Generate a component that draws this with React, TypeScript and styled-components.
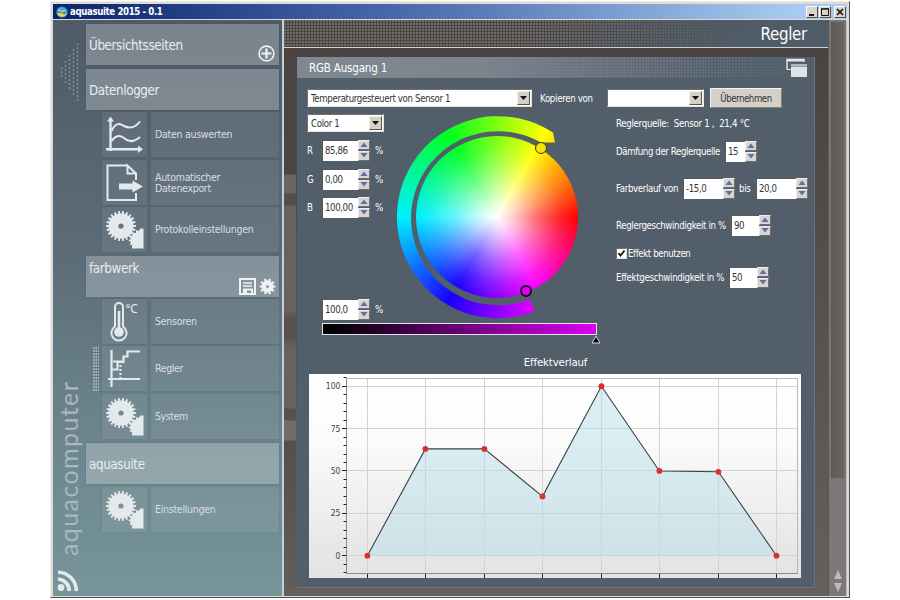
import React from "react";
import styled, { createGlobalStyle } from "styled-components";

const Global = createGlobalStyle`
  *, *::before, *::after { box-sizing: border-box; }
  body { margin: 0; background: #fff; }
  svg { display: block; }
`;

const ui = `"DejaVu Sans Condensed", "DejaVu Sans", sans-serif`;

/* ---------- window ---------- */
const Screen = styled.div`
  width: 900px;
  height: 600px;
  padding: 1px 50px 2px;
  overflow: hidden;
  font-family: ${ui};
  font-stretch: condensed;
  white-space: nowrap;
`;
const Window = styled.div`
  height: 597px;
  display: flex;
  flex-direction: column;
  background: #dedbd4;
  border: 1px solid #efede8;
  border-right-color: #55504b;
  border-bottom-color: #55504b;
  padding: 2px 2px 1px;
`;
const TitleBar = styled.header`
  flex: none;
  height: 15px;
  display: flex;
  align-items: center;
  padding: 0 1px 0 3px;
  background: linear-gradient(90deg, #0a246a, #5474b4 50%, #a6caf0 93%);
`;
const TitleText = styled.span`
  flex: 1;
  margin-left: 2px;
  font: bold 9.6px/15px ${ui};
  font-stretch: condensed;
  letter-spacing: -0.38px;
  color: #fff;
`;
const CaptionButton = styled.span<{ $gap?: boolean }>`
  width: 12px;
  height: 12px;
  margin-left: ${(p) => (p.$gap ? 3 : 1)}px;
  background: #d8d4cc;
  border: 1px solid #fff;
  border-right-color: #55504b;
  border-bottom-color: #55504b;
`;
const Body = styled.div`
  flex: 1;
  min-height: 0;
  display: flex;
  margin-top: 1px;
`;

/* ---------- sidebar ---------- */
const Sidebar = styled.aside`
  width: 231px;
  flex: none;
  display: flex;
  border-right: 2px solid #c3d0d4;
  background: linear-gradient(#4f5b67, #5b6c78 40%, #6c858d 72%, #77959b);
`;
const Rail = styled.div`
  width: 33px;
  flex: none;
  display: flex;
  flex-direction: column;
  align-items: flex-start;
`;
const CollapseDots = styled.svg`
  margin: 21px 0 0 6px;
`;
const Brand = styled.div`
  margin: auto 0 0 2px;
  height: 178px;
  writing-mode: vertical-rl;
  transform: rotate(180deg);
  font: 400 25px/26px Lato, sans-serif;
  letter-spacing: 1.4px;
  color: #a9b8bf;
`;
const RssIcon = styled.svg`
  margin: 14px 0 4px 4px;
`;
const Menu = styled.nav`
  width: 193px;
  padding-top: 4px;
`;
const Section = styled.div<{ $top?: boolean; $gap: number }>`
  height: 41px;
  margin-top: ${(p) => p.$gap}px;
  padding: 0 3px 2px 3px;
  display: flex;
  justify-content: space-between;
  background: rgba(255, 255, 255, 0.25);
  box-shadow: 0 0 2px rgba(60, 70, 80, 0.35);
  font-size: 13.3px;
  line-height: ${(p) => (p.$top ? 25 : 43)}px;
  letter-spacing: -0.38px;
  color: #e9edf0;
`;
const SectionTools = styled.div`
  display: flex;
  align-items: flex-end;
  gap: 3px;
`;
const Entry = styled.div<{ $gap: number }>`
  height: 45px;
  margin: ${(p) => p.$gap}px 0 0 16px;
  display: grid;
  grid-template-columns: 45px 1fr;
  gap: 4px;
`;
const Tile = styled.div`
  background: rgba(255, 255, 255, 0.07);
  box-shadow: 0 0 2px rgba(60, 75, 85, 0.25);
`;
const EntryLabel = styled(Tile)<{ $ls?: number }>`
  display: flex;
  align-items: center;
  padding: 1px 0 0 4px;
  font-size: 10.5px;
  line-height: 11.5px;
  letter-spacing: ${(p) => p.$ls ?? -0.27}px;
  white-space: pre;
  color: #d8dfe4;
`;
const GripRow = styled.div`
  position: relative;
`;
const Grip = styled.div`
  position: absolute;
  left: 7px;
  top: 1px;
  width: 6px;
  height: 44px;
  background: radial-gradient(circle at 1px 1px, #aebac2 0.7px, transparent 1px) 0 0 / 2.5px 3px;
`;

/* ---------- main ---------- */
const Main = styled.main`
  width: 544px;
  flex: none;
  display: flex;
  flex-direction: column;
  background: linear-gradient(#494441 5%, #655f5d);
`;
const PageHeader = styled.div`
  height: 28px;
  display: flex;
  align-items: center;
  justify-content: flex-end;
  padding-right: 21px;
  border-bottom: 1px solid #c9d4d8;
  font-size: 16.8px;
  letter-spacing: -0.3px;
  color: #fff;
  background:
    linear-gradient(90deg, transparent 45%, #4f5b66 85%),
    radial-gradient(circle at 1px 1px, #807b79 0.6px, transparent 1px) 0 0 / 3px 3px,
    #494543;
`;
const PanelArea = styled.div`
  flex: 1;
  display: grid;
  grid-template-columns: 12px 518px;
  gap: 1px;
  padding: 9px 0 8px;
`;
const Backdrop = styled.div`
  background: linear-gradient(
    #4a4542 0 117px, #6b6562 118px 136px, #544f4c 137px 148px, #67615f 149px 253px,
    #56514e 262px 280px, #67625f 290px 351px, #57524f 352px 363px, #716b69 364px 383px,
    #544f4c 384px, #625c5a
  );
`;
const Panel = styled.section`
  display: flex;
  flex-direction: column;
  background: #525e6a;
  border-right: 1px solid #6d7377;
  border-bottom: 1px solid #6d7377;
`;
const PanelHeader = styled.div`
  flex: none;
  height: 21px;
  display: flex;
  align-items: center;
  justify-content: space-between;
  padding: 0 6px 0 12px;
  font-size: 11.5px;
  letter-spacing: -0.19px;
  color: #fff;
  background:
    linear-gradient(90deg, #7f8891, rgba(127, 136, 145, 0.9) 35%, rgba(82, 94, 106, 0.3) 80%, #525e6a),
    radial-gradient(circle at 1px 1px, #75808a 0.6px, transparent 1px) 0 0 / 3px 3px,
    #525e6a;
`;
const PanelTitle = styled.span`
  padding-top: 1px;
`;
const SourceRow = styled.div`
  display: flex;
  align-items: center;
  height: 20px;
  margin: 10px 0 0 10px;
`;
const Label = styled.span<{ $ls?: number; $ml?: number; $w?: number }>`
  flex: none;
  width: ${(p) => (p.$w ? `${p.$w}px` : "auto")};
  margin-left: ${(p) => p.$ml ?? 0}px;
  font-size: 9.6px;
  letter-spacing: ${(p) => p.$ls ?? -0.3}px;
  white-space: pre;
  color: #fff;
`;
const Combo = styled.div<{ $w: number; $ml?: number }>`
  width: ${(p) => p.$w}px;
  height: 18px;
  margin-left: ${(p) => p.$ml ?? 0}px;
  display: flex;
  justify-content: space-between;
  align-items: stretch;
  padding: 1px 1px 1px 3px;
  background: #fff;
  border: 1px solid #6e7072;
  border-right-color: #e6e4df;
  border-bottom-color: #e6e4df;
  font-size: 9.6px;
  line-height: 15px;
  letter-spacing: -0.34px;
  color: #333;
`;
const ComboArrow = styled.span`
  width: 13px;
  display: grid;
  place-items: center;
  background: #d4d0c8;
  border: 1px solid #f3f1ed;
  border-right-color: #55514c;
  border-bottom-color: #55514c;
`;
const Button = styled.button`
  width: 72px;
  height: 20px;
  margin-left: 6px;
  padding: 0;
  background: #d4d0c8;
  border: 1px solid #f5f3ef;
  border-right-color: #85817b;
  border-bottom-color: #85817b;
  font: 9.6px ${ui};
  font-stretch: condensed;
  letter-spacing: -0.45px;
  color: #333;
`;
const Controls = styled.div`
  display: grid;
  grid-template-columns: 83px 206px 1fr;
  height: 208px;
  margin: 4px 0 0 10px;
`;
const Channels = styled.div`
  display: flex;
  flex-direction: column;
`;
const Line = styled.div<{ $mt: number; $h?: number }>`
  height: ${(p) => p.$h ?? 20}px;
  margin-top: ${(p) => p.$mt}px;
  display: flex;
  align-items: center;
`;
const SpinBox = styled.div<{ $w: number; $ml?: number }>`
  flex: none;
  width: ${(p) => p.$w}px;
  height: 21px;
  margin-left: ${(p) => p.$ml ?? 0}px;
  display: grid;
  grid-template-columns: 1fr 12px;
`;
const SpinValue = styled.span`
  padding-left: 2px;
  background: #fff;
  border-top: 1px solid #55585a;
  border-left: 1px solid #55585a;
  font-size: 9.6px;
  line-height: 19px;
  letter-spacing: -0.4px;
  color: #333;
`;
const SpinButtons = styled.span`
  display: grid;
  grid-template-rows: 1fr 1fr;
  gap: 1px;
`;
const SpinButton = styled.span`
  display: grid;
  place-items: center;
  background: #d8d5ce;
  border: 1px solid #f0eeea;
  border-right-color: #716d68;
  border-bottom-color: #716d68;
`;
const CheckBox = styled.span`
  width: 11px;
  height: 11px;
  background: #fff;
  border: 1px solid #6e6e6e;
  border-right-color: #ddd;
  border-bottom-color: #ddd;
`;
const hues = `conic-gradient(from 90deg, #ff0000, #ff00ff 60deg, #1a00ff 120deg, #00f0ff 180deg, #00ff20 240deg, #ffff00 300deg, #ff0000)`;
const Wheel = styled.div`
  position: relative;
  height: 208px;
`;
const HueArc = styled.div`
  position: absolute;
  left: 5px;
  top: 2.5px;
  width: 204px;
  height: 204px;
  background: ${hues};
  clip-path: path("M158 18 A101 101 0 1 0 139 197 L138 192 L134 185 A87 87 0 1 1 146 28 L160 28 Z");
`;
const HueDisc = styled.div`
  position: absolute;
  left: 26px;
  top: 23.5px;
  width: 162px;
  height: 162px;
  border-radius: 50%;
  background: radial-gradient(circle closest-side, #fff, rgba(255, 255, 255, 0.82) 18%, rgba(255, 255, 255, 0.42) 50%, rgba(255, 255, 255, 0.12) 80%, transparent), ${hues};
`;
const Handle = styled.span<{ $x: number; $y: number; $bold?: boolean }>`
  position: absolute;
  left: ${(p) => p.$x - 6}px;
  top: ${(p) => p.$y - 6}px;
  width: 12px;
  height: 12px;
  border-radius: 50%;
  background: ${(p) => (p.$bold ? "#dc00f4" : "#f2e500")};
  border: ${(p) => (p.$bold ? 2 : 1)}px solid ${(p) => (p.$bold ? "#1c0424" : "#3c3a20")};
`;
const Settings = styled.div`
  padding-left: 20px;
`;
const Brightness = styled.div`
  flex: none;
  width: 275px;
  height: 12px;
  margin: 3px 0 0 25px;
  border: 1px solid #e3e6e8;
  background: linear-gradient(90deg, #000 3%, #d800f0 98%);
`;
const BrightnessThumb = styled.svg`
  flex: none;
  margin: 0 0 0 292.5px;
`;
const ChartTitle = styled.h2`
  flex: none;
  margin: 11px 0 4px;
  text-align: center;
  font-size: 11.3px;
  font-weight: normal;
  line-height: 15px;
  letter-spacing: -0.12px;
  color: #fff;
`;
const ChartFrame = styled.div`
  width: 492px;
  height: 204px;
  margin-left: 12px;
  background: linear-gradient(#fff, #fcfcfc 30%, #e6e6e6 88%, #e4e4e4);
`;
const AxisText = styled.text`
  font-family: ${ui};
  font-stretch: condensed;
  font-size: 8.6px;
  fill: #444;
  text-anchor: end;
`;

/* ---------- scrollbar ---------- */
const ScrollTrack = styled.div`
  flex: 1;
  display: flex;
  flex-direction: column;
  align-items: center;
  justify-content: space-between;
  padding: 1px 1px 2px;
  background: #7b7877;
  border-left: 1px solid #5a5654;
  border-right: 1px solid #c0bdb8;
`;
const ScrollThumb = styled.div`
  width: 100%;
  height: 458px;
  border: 1px solid #77736f;
  background: linear-gradient(90deg, #5e5a59, #686564);
`;

/* ---------- icons ---------- */
const ink = "#e4e9ed";

function gearPath(cx: number, cy: number, outer: number, inner: number, teeth: number) {
  const pts: string[] = [];
  for (let i = 0; i < teeth; i++) {
    const a = (i / teeth) * Math.PI * 2;
    const s = (Math.PI * 2) / teeth;
    const seg: [number, number][] = [[-0.3, inner], [-0.22, outer], [0.22, outer], [0.3, inner]];
    seg.forEach(([k, r]) => pts.push(`${(cx + Math.cos(a + k * s) * r).toFixed(2)} ${(cy + Math.sin(a + k * s) * r).toFixed(2)}`));
  }
  return `M${pts.join("L")}Z`;
}
const hole = (cx: number, cy: number, r: number) => `M${cx - r} ${cy}a${r} ${r} 0 1 0 ${2 * r} 0a${r} ${r} 0 1 0 ${-2 * r} 0Z`;

const GearsIcon = () => (
  <svg width="45" height="45" fill={ink} fillRule="evenodd">
    <path d={gearPath(19, 19, 15, 12.5, 22) + hole(19, 19, 2.6)} />
    <path d="M41.5 21.5V41.5H30V38.5H31L27.5 37.5L29 35.5L26.5 33.5L29 31.5L27.5 29L30.5 28.5L31 25.5L34 26V23L36.5 24L38.5 21.5Z" />
  </svg>
);
const ChartIcon = () => (
  <svg width="45" height="45" fill="none" stroke={ink} strokeWidth="2">
    <path d="M8.5 6V39M4 37.2H39" strokeWidth="2.4" />
    <path d="M5 9.5L8.5 4.5L12 9.5M36 33.5L41 37.2L36 41" fill={ink} stroke="none" />
    <path d="M9.5 19C14 9 19 12 22 14C28 17 33 16 38 9.5" />
    <path d="M9.5 29C14 23 18 23 22 26C27 31 32 30 38 25" />
  </svg>
);
const ExportIcon = () => (
  <svg width="45" height="45" fill="none" stroke={ink} strokeWidth="2">
    <path d="M25 5.5H5.5V40H34V33M34 20V13.5L25.5 5.5V13.5H34" />
    <path d="M17 23.5H30.5V20.5L41 26.5L30.5 32.5V29.5H17Z" fill={ink} stroke="none" />
  </svg>
);
const ThermoIcon = () => (
  <svg width="45" height="45" fill="none" stroke={ink} strokeWidth="2">
    <path d="M13 27.5V8A4 4 0 0 1 21 8V27.5A7.6 7.6 0 1 1 13 27.5Z" />
    <circle cx="17" cy="33" r="4.8" fill={ink} stroke="none" />
    <path d="M17 12V33" strokeWidth="2.6" />
    <text x="23.5" y="13.5" fontFamily="Noto Sans" fontSize="12" fill={ink} stroke="none" letterSpacing="-0.5">°C</text>
  </svg>
);
const RegulatorIcon = () => (
  <svg width="45" height="45" fill="none" stroke={ink} strokeWidth="2.2">
    <path d="M9.5 4V41M6 33H38" />
    <path d="M9.5 23.5H15.5V16H21.5V10.5H25.5V5.5H38M11 15.5H20" />
    <path d="M18.5 19V32" strokeDasharray="2 2" />
  </svg>
);
const Rss = () => (
  <RssIcon width="22" height="22" fill="none" stroke={ink} strokeWidth="3.6">
    <circle cx="4" cy="17.5" r="3.4" fill={ink} stroke="none" />
    <path d="M1 9A12 12 0 0 1 12.3 21M1 2.2A18.6 18.6 0 0 1 19.3 21" />
  </RssIcon>
);

const SpinArrows = () => (
  <SpinButtons>
    <SpinButton><svg width="8" height="5"><path d="M0.5 5L4 0.5L7.5 5Z" fill="#5a6fae" /></svg></SpinButton>
    <SpinButton><svg width="8" height="5"><path d="M0.5 0L4 4.5L7.5 0Z" fill="#5a6fae" /></svg></SpinButton>
  </SpinButtons>
);
const Spin = ({ w, ml, children }: { w: number; ml?: number; children: string }) => (
  <SpinBox $w={w} $ml={ml}><SpinValue>{children}</SpinValue><SpinArrows /></SpinBox>
);
const Select = ({ w, ml, children }: { w: number; ml?: number; children?: string }) => (
  <Combo $w={w} $ml={ml}>
    <span>{children}</span>
    <ComboArrow><svg width="7" height="4"><path d="M0 0H7L3.5 4Z" fill="#111" /></svg></ComboArrow>
  </Combo>
);

/* ---------- chart ---------- */
const xs = [367.4, 425.4, 484.4, 542.5, 601.4, 659.4, 718.4, 776.5];
const values = [0, 63, 63, 35, 100, 50, 49.5, 0];
const yOf = (v: number) => 555.7 - v * 1.695;
const points = xs.map((x, i) => `${x},${yOf(values[i])}`).join(" ");
const minorTicks = Array.from({ length: 24 }, (_, i) => -10 + i * 5);

const EffectChart = () => (
  <ChartFrame>
    <svg width="492" height="204" viewBox="309 374 492 204">
      <g stroke="#d3d3d3" strokeWidth="1">
        {xs.map((x) => <path key={x} d={`M${Math.floor(x) + 0.5} 378V573`} />)}
        {[0, 25, 50, 75, 100].map((v) => <path key={v} d={`M347 ${Math.floor(yOf(v)) + 0.5}H797`} />)}
      </g>
      <path d="M347 378.5H797.5V573" fill="none" stroke="#b9b9b9" />
      <polygon points={points} fill="#b4deeb" fillOpacity="0.48" />
      <path d="M346.5 378V573.5H798" fill="none" stroke="#8a8a8a" />
      <g stroke="#222">
        {minorTicks.map((v) => <path key={v} d={`M${v % 25 === 0 ? 342 : 343.5} ${Math.floor(yOf(v)) + 0.5}H346.5`} />)}
        {xs.map((x) => <path key={x} d={`M${Math.floor(x) + 0.5} 574V578`} />)}
      </g>
      {[0, 25, 50, 75, 100].map((v) => <AxisText key={v} x="340.5" y={yOf(v) + 3}>{v}</AxisText>)}
      <polyline points={points} fill="none" stroke="#3b4245" strokeWidth="1.1" />
      {xs.map((x, i) => <circle key={x} cx={x} cy={yOf(values[i])} r="2.9" fill="#d8302e" />)}
    </svg>
  </ChartFrame>
);

export default function App() {
  return (
    <Screen>
      <Global />
      <Window>
        <TitleBar>
          <svg width="12" height="12" viewBox="0 0 12 12">
            <circle cx="6" cy="6" r="5.6" fill="#2f9bd6" />
            <path d="M0.6 6.6C3 9 4.5 5.5 6.5 7.5S10 8 11.5 6.5A5.6 5.6 0 0 1 0.6 6.6Z" fill="#f3d23a" />
            <path d="M2 4.5C4 3 5 6.5 7 5S9 4.5 10 5.5" stroke="#e8f4fa" fill="none" />
            <path d="M3 2.5H8" stroke="#d98436" />
          </svg>
          <TitleText>aquasuite 2015 - 0.1</TitleText>
          <CaptionButton><svg width="10" height="10"><path d="M2 8H7" stroke="#111" strokeWidth="2" /></svg></CaptionButton>
          <CaptionButton><svg width="10" height="10"><path d="M1.5 2H8.5V8.5H1.5ZM1 1.8H9" stroke="#111" fill="none" /></svg></CaptionButton>
          <CaptionButton $gap><svg width="10" height="10"><path d="M2 2L8 8M8 2L2 8" stroke="#111" strokeWidth="1.6" /></svg></CaptionButton>
        </TitleBar>

        <Body>
          <Sidebar>
            <Rail>
              <CollapseDots width="22" height="62">
                {[0, 1, 2, 3, 4].map((c) => {
                  const n = 15 - c * 3;
                  return Array.from({ length: n }, (_, r) => (
                    <circle key={`${c}-${r}`} cx={18.5 - c * 4} cy={31 + (r - (n - 1) / 2) * 4} r="0.85" fill="#97a2ab" />
                  ));
                })}
              </CollapseDots>
              <Brand>aquacomputer</Brand>
              <Rss />
            </Rail>
            <Menu>
              <Section $gap={0}>
                Übersichtsseiten
                <SectionTools>
                  <svg width="18" height="18" fill="none" stroke="#eef2f4" strokeWidth="1.6">
                    <circle cx="8.5" cy="8.5" r="7.4" /><path d="M8.5 3.5V13.5M3.5 8.5H13.5" strokeWidth="2.2" />
                  </svg>
                </SectionTools>
              </Section>
              <Section $gap={4}>Datenlogger</Section>
              <Entry $gap={2}><Tile><ChartIcon /></Tile><EntryLabel>Daten auswerten</EntryLabel></Entry>
              <Entry $gap={3}><Tile><ExportIcon /></Tile><EntryLabel $ls={-0.3}>{"Automatischer\nDatenexport"}</EntryLabel></Entry>
              <Entry $gap={2}><Tile><GearsIcon /></Tile><EntryLabel>Protokolleinstellungen</EntryLabel></Entry>
              <Section $gap={4} $top>
                farbwerk
                <SectionTools>
                  <svg width="17" height="17" fill="none" stroke="#eef2f4" strokeWidth="2">
                    <path d="M1 1H16V16H1Z" /><path d="M4 5H13M4 8H13" strokeWidth="1.4" /><path d="M5 16V11.5H13V16" /><path d="M7 12V16" />
                  </svg>
                  <svg width="17" height="17" fill="#eef2f4" fillRule="evenodd">
                    <path d={gearPath(8.5, 8.5, 8, 6, 10) + hole(8.5, 8.5, 1.5)} />
                  </svg>
                </SectionTools>
              </Section>
              <Entry $gap={2}><Tile><ThermoIcon /></Tile><EntryLabel>Sensoren</EntryLabel></Entry>
              <GripRow>
                <Grip />
                <Entry $gap={2}><Tile><RegulatorIcon /></Tile><EntryLabel $ls={-0.38}>Regler</EntryLabel></Entry>
              </GripRow>
              <Entry $gap={3}><Tile><GearsIcon /></Tile><EntryLabel $ls={-0.4}>System</EntryLabel></Entry>
              <Section $gap={4}>aquasuite</Section>
              <Entry $gap={3}><Tile><GearsIcon /></Tile><EntryLabel>Einstellungen</EntryLabel></Entry>
            </Menu>
          </Sidebar>

          <Main>
            <PageHeader>Regler</PageHeader>
            <PanelArea>
              <Backdrop />
              <Panel>
                <PanelHeader>
                  <PanelTitle>RGB Ausgang 1</PanelTitle>
                  <svg width="22" height="19" fill="none" stroke={ink}>
                    <path d="M1 11.5V1.5H18V4" strokeWidth="1.4" /><path d="M1 2.5H18" strokeWidth="2" /><path d="M1 11.5H5" />
                    <path d="M5 8.5H21V19H5Z" fill="#dbe4ea" stroke="none" /><path d="M5 7H21" strokeWidth="1.3" />
                  </svg>
                </PanelHeader>
                <SourceRow>
                  <Select w={225}>Temperaturgesteuert von Sensor 1</Select>
                  <Label $ml={8} $w={67}>Kopieren von</Label>
                  <Select w={97} ml={0}></Select>
                  <Button>Übernehmen</Button>
                </SourceRow>
                <Controls>
                  <Channels>
                    <Line $mt={2} $h={18}><Select w={77}>Color 1</Select></Line>
                    <Line $mt={8}><Label $w={15}>R</Label><Spin w={48}>85,86</Spin><Label $ml={5}>%</Label></Line>
                    <Line $mt={9}><Label $w={15}>G</Label><Spin w={48}>0,00</Spin><Label $ml={5}>%</Label></Line>
                    <Line $mt={8}><Label $w={15}>B</Label><Spin w={48}>100,00</Spin><Label $ml={5}>%</Label></Line>
                    <Line $mt={82}><Spin w={48} ml={15}>100,0</Spin><Label $ml={5}>%</Label></Line>
                  </Channels>
                  <Wheel>
                    <HueArc />
                    <HueDisc />
                    <Handle $x={150.5} $y={35.5} />
                    <Handle $x={135.5} $y={179} $bold />
                  </Wheel>
                  <Settings>
                    <Line $mt={1}><Label $ls={-0.29}>Reglerquelle:  Sensor 1 ,  21,4 °C</Label></Line>
                    <Line $mt={8}><Label $w={109} $ls={-0.4}>Dämfung der Reglerquelle</Label><Spin w={32}>15</Spin></Line>
                    <Line $mt={17}>
                      <Label $w={67} $ls={-0.34}>Farbverlauf von</Label><Spin w={52}>-15,0</Spin>
                      <Label $ml={4} $w={17}>bis</Label><Spin w={52}>20,0</Spin>
                    </Line>
                    <Line $mt={17}><Label $w={115} $ls={-0.33}>Reglergeschwindigkeit in %</Label><Spin w={40}>90</Spin></Line>
                    <Line $mt={8}>
                      <CheckBox><svg width="9" height="9"><path d="M1.5 4L3.5 6.5L7.5 1.5" stroke="#111" strokeWidth="1.8" fill="none" /></svg></CheckBox>
                      <Label $ml={1} $ls={-0.4}>Effekt benutzen</Label>
                    </Line>
                    <Line $mt={4}><Label $w={113} $ls={-0.31}>Effektgeschwindigkeit in %</Label><Spin w={40}>50</Spin></Line>
                  </Settings>
                </Controls>
                <Brightness />
                <BrightnessThumb width="12" height="9">
                  <path d="M6 1L10 8H2Z" fill="#0a0a0a" stroke="#d5dade" strokeWidth="1" />
                </BrightnessThumb>
                <ChartTitle>Effektverlauf</ChartTitle>
                <EffectChart />
              </Panel>
            </PanelArea>
          </Main>

          <ScrollTrack>
            <ScrollThumb />
            <svg width="10" height="24" fill="#bdbbba">
              <path d="M5 0L9 9H1ZM5 22L9 13H1Z" />
            </svg>
          </ScrollTrack>
        </Body>
      </Window>
    </Screen>
  );
}
